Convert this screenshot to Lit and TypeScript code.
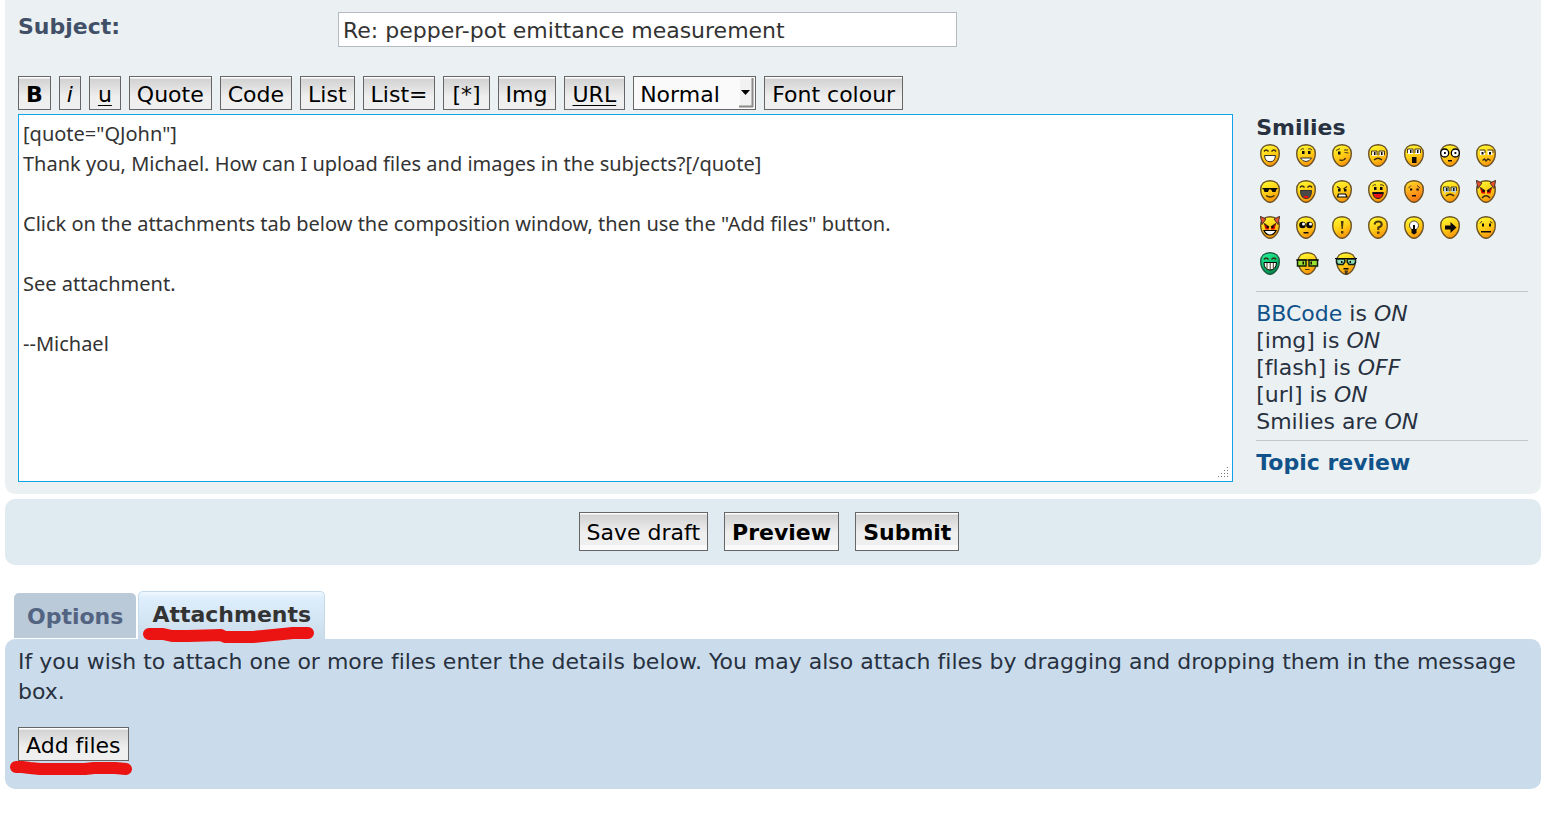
import { LitElement, html, svg, css } from "lit";
import { customElement, property, state } from "lit/decorators.js";

const round = svg`<path d="M10 .7C15.6.7 19.300 4 19.300 9.500 19.300 13.800 17 18.200 14 20.800Q10 23.800 6 20.800C3 18.200.7 13.800.7 9.500.7 4 4.400.7 10 .7Z"/>`;
const arcs = svg`<path class="l" d="M4 7.500Q6 4.500 8.500 7.500M11.500 7.500Q14 4.500 16 7.500"/>`;
const dots = svg`<path class="k" d="M6 7h2.500v3H6zM12 7h2.500v3H12z"/><path class="t" d="M4.500 6Q6 4 8 5M12 5Q14 4 16 6"/>`;
const tears = (y: number, c: string) => svg`
  <path d="M4 ${y}h5v5H4zM11 ${y}h5v5H11z" fill=${c}/>
  <path class="t" d="M3.500 ${y + 4}V${y}H9V${y + 4}M11 ${y + 4}V${y}H16.500V${y + 4}"/>
  <path class="k" d="M6 ${y + 1}h1.500v3H6zM13 ${y + 1}h1.500v3H13z"/>`;
const frown = svg`<path class="l" d="M6 16Q10 12.500 14 16"/>`;
const horns = svg`<path d="M.3.3 6 3 2 8.500ZM19.700.3 14 3 18 8.500Z" fill="#e8502c" stroke="#4a3430"/>`;
const rage = svg`<path d="M4 8l5 2.500v3H5.500zM16 8l-5 2.500v3h3.500z" fill="#d80800"/>
  <path class="l" d="M4 7.500 9 11M16 7.500 11 11"/><path class="k" d="M6.500 10h2v2h-2zM11.500 10h2v2h-2z"/>`;

const faces: Record<string, { w?: number; tone?: string; art: unknown }> = {
  "Very happy": { art: svg`${arcs}<path d="M4.500 11.500h11Q15 17.800 10 17.800T4.500 11.500Z" fill="#fff" stroke="#33302a"/>` },
  Smile: { art: svg`${dots}<path d="M4.500 14h11Q13.500 17.500 10 17.500T4.500 14Z" fill="#fff" stroke="#33302a"/>` },
  Wink: { art: svg`<path class="k" d="M6 7.500h2.500v3H6z"/><path class="t" d="M4 6.500 8 4.500M12.500 8.500 16.500 9M12 6H16"/><path class="l" d="M7.500 15.800Q12 17.500 13.500 14"/>` },
  Sad: { art: svg`${tears(7, "#f4ecd0")}${frown}` },
  Surprised: { art: svg`${tears(5, "#fff")}<path class="k" d="M8 13h4.500v6H8z"/>` },
  Shocked: { art: svg`<circle cx="4.700" cy="9" r="4" fill="#fff" stroke="#000" stroke-width="1.300"/><circle cx="15.300" cy="9" r="4" fill="#fff" stroke="#000" stroke-width="1.300"/><path class="k" d="M4 8h1.800v2H4zM14.500 8h1.800v2h-1.800zM8 16h4v1.500H8z"/>` },
  Confused: { art: svg`<path d="M4 6.500h5v4.500H4zM11.500 6.500h5v4.500h-5z" fill="#fff"/><path class="t" d="M3.500 6H9V9M11.500 6H17V9"/><path class="k" d="M5.500 8h2v2.500h-2zM13 8h2v2.500h-2z"/><path class="l" d="M6.500 16.500 8.500 15 10 17 12 15 14.500 16.500"/>` },
  Cool: { art: svg`<path class="k" d="M2.500 8h15v1.300h-1L15.500 12h-3L11 9.500H9L8 12H4.500L3.500 9.300h-1z"/><path class="l" d="M6 15.500Q10 18.500 14.500 15.500"/>` },
  Laughing: { art: svg`${arcs}<path d="M4.500 10.500h11Q15.500 18.500 10 18.500T4.500 10.500Z" fill="#4a4a48" stroke="#33302a"/><path d="M7 17Q10 14.500 13 17L10 18.500Z" fill="#f01010"/>` },
  Mad: { art: svg`<path class="l" d="M5 6.500 8.500 9M15 6.500 11.500 9"/><path class="k" d="M6 9h2.500v2.500H6zM12 9h2.500v2.500H12z"/><path d="M5.500 17 6.500 14h7L15 17Z" fill="#fff" stroke="#000" stroke-width="1.200"/>` },
  Razz: { art: svg`${dots}<path d="M4.500 12.500h11Q14.500 18.500 10 18.500T4.500 12.500Z" fill="#ef1414" stroke="#222"/><path class="k" d="M5 12.500h10v1.500H5z"/>` },
  Embarrassed: { tone: "blush", art: svg`<path class="k" d="M6 8.500h2.200v2H6zM12.500 8.500h2.200v2h-2.200zM8 15h4v1.500H8z"/><path class="t" d="M4.500 8 7 5.500M13 5.500 16 8"/>` },
  Crying: { art: svg`${tears(7, "#bcd4d8")}${frown}<path d="M5 12v2M15 12v2" stroke="#b8dce4"/>` },
  Evil: { art: svg`${horns}${rage}<path class="l" d="M6 18Q10 13.500 14 18"/>` },
  Twisted: { art: svg`${horns}${rage}<path d="M4 14.500h12Q14 19 10 19T4 14.500Z" fill="#fff" stroke="#000" stroke-width="1.200"/>` },
  "Rolling eyes": { art: svg`<circle cx="6.500" cy="9" r="3.300" class="k"/><circle cx="13.500" cy="9" r="3.300" class="k"/><circle cx="7.500" cy="8" r="1.500" fill="#fff"/><circle cx="14.500" cy="8" r="1.500" fill="#fff"/><path class="k" d="M7.500 16h5v1.500h-5z"/>` },
  Exclamation: { art: svg`<path d="M8.800 5h2.800L10.800 13H9.600zM9 15h2.400v2.400H9z" fill="#4d3a10"/>` },
  Question: { art: svg`<path d="M6.500 8.500Q7 5.500 10.300 5.500T13.800 8.500Q13.500 10.500 10.300 11.500V14" fill="none" stroke="#4d3a10" stroke-width="2"/><path d="M9 15.500h2.500v2.300H9z" fill="#4d3a10"/>` },
  Idea: { art: svg`<circle cx="10" cy="9.500" r="4.500" fill="#fff" stroke="#222" stroke-width=".8"/><path class="k" d="M9 9h2v4h1.500v4L10 18.500 7.500 17v-4H9z"/>` },
  Arrow: { art: svg`<path class="k" d="M5 9.500h5.500V6l6 5.500-6 5.500v-3.500H5z"/>` },
  Neutral: { art: svg`<path class="k" d="M6 7.500h2v3H6zM13 7.500h2v3h-2zM5 15h10v1.500H5z"/><path class="t" d="M4 7.500 6 5M14 5.500 16.500 7"/>` },
  Green: { tone: "green", art: svg`${arcs}<path d="M4 10.500h12.500Q16 18 10 18T4 10.500Z" fill="#fff" stroke="#000"/><path class="t" d="M7 11v6M10.200 11v7M13.300 11v6"/>` },
  Geek: { w: 23, art: svg`<path d="M1.500 8h8.500v6H1.500zM13 8h8.500v6H13z" fill="#9be02c" stroke="#10200a" stroke-width="1.500"/><path class="k" d="M0 7.500h23v1H0zM6.500 9.500H8v3H6.500zM14.500 9.500H16v3h-1.500z"/><path class="t" d="M9 17.500H13.500"/>` },
  "Uber geek": { w: 22, art: svg`<path d="M1.500 7h8.300v3L8 12.500H3L1.500 10.500zM12.200 7h8.300v3.500L19 12.500h-5L12.200 10z" fill="#8fdcb4" stroke="#0e1e18" stroke-width="1.500"/><path class="k" d="M0 6 22 6V7H0zM6 9h1.500v2H6zM14.500 9H16v2h-1.500zM8.500 16h5v1.500h-5z"/><path d="M9.500 18.500h3.500l-.7 4.500h-2z" fill="#4a3a20"/>` },
};

@customElement("smiley-face")
class SmileyFace extends LitElement {
  @property() name = "Smile";

  static styles = css`
    :host { display: block; height: 23px; }
    svg { display: block; }
    .k { fill: #0c0a08; }
    .l { fill: none; stroke: #3a2c10; stroke-width: 1.400; }
    .t { fill: none; stroke: #4a3a18; stroke-width: 1; }
  `;

  render() {
    const { w = 20, tone = "gold", art } = faces[this.name];
    const stops = { gold: ["#fff02a", "#ffc814", "#f88a08"], blush: ["#ffd024", "#ff9a1a", "#f07010"], green: ["#20e890", "#08b868", "#088048"] }[tone]!;
    return html`<svg width=${w} height="23" viewBox="0 0 ${w} 23" aria-hidden="true">
      <defs><linearGradient id="skin" x1=".3" y1="0" x2=".7" y2="1">
        <stop offset=".1" stop-color=${stops[0]} /><stop offset=".55" stop-color=${stops[1]} /><stop offset="1" stop-color=${stops[2]} />
      </linearGradient></defs>
      <g transform="translate(${(w - 20) / 2} 0)" fill="url(#skin)" stroke=${tone === "green" ? "#1c5a40" : "#6a5228"} stroke-width="1.400">${round}</g>
      ${art}
    </svg>`;
  }
}

@customElement("app-root")
class AppRoot extends LitElement {
  @state() tab = "attachments";

  static styles = css`
    :host {
      display: block;
      padding: 0 13px 0 5px;
      background: #fff;
      color: #28313f;
      font: 22px/30px Verdana, "DejaVu Sans", sans-serif;
      font-variant-ligatures: none;
    }
    * { box-sizing: border-box; }
    form { margin: 0; }
    a { color: #105289; text-decoration: none; }
    input, textarea, select, button { font: inherit; margin: 0; border-radius: 0; }
    .panel { border-radius: 10px; padding: 13px; }
    .compose { background: #ebf0f3; border-radius: 0 0 10px 10px; padding: 12px 13px; }
    .subject { display: flex; align-items: flex-start; }
    .subject label { width: 320px; color: #425067; font-weight: bold; }
    .subject input {
      width: 41%; height: 35px; padding: 3px 4px 1px;
      border: 1px solid #b4bac0; background: #fff; color: #333;
    }
    .toolbar { display: flex; flex-wrap: wrap; gap: 8px; margin-top: 29px; }
    .button {
      height: 34px; padding: 3px 7px 0; line-height: 30px; white-space: nowrap;
      border: 1px solid #666; color: #000;
      background: linear-gradient(#fff 0 1px, #d2d2d2 2px, #efefef 20px);
    }
    .bold { font-weight: bold; }
    .italic { font-style: italic; }
    .under, .item { padding: 3px 8px 0; }
    .under { text-decoration: underline; text-underline-offset: 3px; text-decoration-thickness: 1px; }
    .size { display: grid; width: 123px; }
    .size select {
      grid-area: 1 / 1; height: 34px; padding: 3px 6px 0; border: 1px solid #666;
      background: #fafafa; color: #000; appearance: none; line-height: 30px;
    }
    .size svg { grid-area: 1 / 1; justify-self: end; align-self: center; margin-right: 2px; pointer-events: none; }
    .body { display: flex; justify-content: space-between; margin-top: 4px; }
    .message { position: relative; flex: 0 1 1215px; height: 368px; }
    .message textarea {
      display: block; width: 100%; height: 100%; padding: 4px; resize: none; outline: none;
      border: 1px solid #11a3ea; background: #fff; color: #333;
      font: 20px/30px "Trebuchet MS", "Noto Sans", sans-serif;
    }
    .grip { position: absolute; right: 5px; bottom: 4px; }
    .side { width: 18%; line-height: 27px; }
    .side h3 { margin: 0; font-size: 22px; line-height: 27px; }
    .smilies { display: flex; flex-wrap: wrap; gap: 13px 16px; padding: 3px 4px 16px; }
    .smilies button { padding: 0; border: 0; background: none; }
    .status { border: solid #c4c8cb; border-width: 1px 0; padding: 8px 0 5px; }
    .status p { margin: 0; }
    .review { margin-top: 8px; font-weight: bold; }
    .actions { display: flex; justify-content: center; gap: 16px; margin-top: 5px; padding-right: 21px; padding-bottom: 14px; background: #e0ebf1; }
    .actions .button { height: 39px; background: linear-gradient(#fff 0 1px, #d2d2d2 2px, #efefef 20px 32px, #fafafa 32px); }
    .tabs { display: flex; align-items: flex-end; gap: 2px; margin-top: 26px; padding-left: 9px; }
    .tab {
      height: 45px; margin-bottom: 1px; padding: 2px 13px 0; border: 0; border-radius: 5px 5px 0 0;
      background: #bacad9; color: #536482; font-weight: bold;
    }
    .tab[aria-selected="true"] {
      height: 48px; margin-bottom: 0; padding: 0 13px 2px; border: 1px solid #c5d9e9; border-bottom: 0;
      background: linear-gradient(#f0f8ff, #deeefc 6px, #cadceb); color: #333;
    }
    .marked { position: relative; display: inline-block; }
    .mark { position: absolute; left: 5px; bottom: -4px; pointer-events: none; overflow: visible; }
    .files { background: #cadceb; padding: 8px 13px 28px; }
    .files p { margin: 0 0 20px; }
    .files .button { display: block; }
    .files .mark { left: -8px; bottom: -15px; }
  `;

  render() {
    const names = Object.keys(faces);
    const draft = `[quote="QJohn"]
Thank you, Michael. How can I upload files and images in the subjects?[/quote]

Click on the attachments tab below the composition window, then use the "Add files" button.

See attachment.

--Michael`;
    return html`
      <form @submit=${(e: Event) => e.preventDefault()}>
        <section class="panel compose">
          <div class="subject">
            <label for="subject">Subject:</label>
            <input id="subject" type="text" value="Re: pepper-pot emittance measurement" />
          </div>
          <div class="toolbar">
            <button type="button" class="button bold">B</button>
            <button type="button" class="button italic">i</button>
            <button type="button" class="button under">u</button>
            ${["Quote", "Code", "List", "List="].map((t) => html`<button type="button" class="button">${t}</button>`)}
            <button type="button" class="button item">[*]</button>
            <button type="button" class="button">Img</button>
            <button type="button" class="button under">URL</button>
            <div class="size">
              <select aria-label="Font size"><option>Normal</option></select>
              <svg width="15" height="30" aria-hidden="true"><path d="M1 1h12v28H1z" fill="#f2f2f2" /><path d="M13.500 0v29M0 28.500h14" stroke="#8a8a88" stroke-width="2" /><path d="M2 12h9l-4.500 5z" fill="#000" /></svg>
            </div>
            <button type="button" class="button">Font colour</button>
          </div>
          <div class="body">
            <div class="message">
              <textarea aria-label="Message" spellcheck="false" .value=${draft}></textarea>
              <svg class="grip" width="11" height="11" aria-hidden="true"><path d="M10 0h1v1h-1zM7 3h1v1H7zM10 3h1v1h-1zM4 6h1v1H4zM7 6h1v1H7zM10 6h1v1h-1zM1 9h1v1H1zM4 9h1v1H4zM7 9h1v1H7zM10 9h1v1h-1z" fill="#777" /></svg>
            </div>
            <aside class="side">
              <h3>Smilies</h3>
              <div class="smilies">
                ${names.map((n) => html`<button type="button" aria-label=${n}><smiley-face name=${n}></smiley-face></button>`)}
              </div>
              <div class="status">
                <p><a href="#bbcode">BBCode</a> is <em>ON</em></p>
                <p>[img] is <em>ON</em></p>
                <p>[flash] is <em>OFF</em></p>
                <p>[url] is <em>ON</em></p>
                <p>Smilies are <em>ON</em></p>
              </div>
              <div class="review"><a href="#review">Topic review</a></div>
            </aside>
          </div>
        </section>
        <section class="panel actions">
          <button type="button" class="button">Save draft</button>
          <button type="button" class="button bold">Preview</button>
          <button type="submit" class="button bold">Submit</button>
        </section>
        <div class="tabs" role="tablist">
          <button type="button" class="tab" role="tab" aria-selected=${this.tab === "options"} @click=${() => (this.tab = "options")}>Options</button>
          <div class="marked">
            <button type="button" class="tab" role="tab" aria-selected=${this.tab === "attachments"} @click=${() => (this.tab = "attachments")}>Attachments</button>
            <svg class="mark" width="171" height="16" viewBox="0 0 171 16" aria-hidden="true"><path d="M6 7H20L29 9H45L78 8 82 10H110L120 9 130 8 150 6H165" fill="none" stroke="#ec1313" stroke-width="12" stroke-linecap="round" stroke-linejoin="round" /></svg>
          </div>
        </div>
        <section class="panel files">
          <p>If you wish to attach one or more files enter the details below. You may also attach files by dragging and dropping them in the message box.</p>
          <div class="marked">
            <button type="button" class="button">Add files</button>
            <svg class="mark" width="122" height="16" viewBox="0 0 122 16" aria-hidden="true"><path d="M6 7H12L20 8 30 9H75L84 8H105L116 9" fill="none" stroke="#ec1313" stroke-width="12" stroke-linecap="round" stroke-linejoin="round" /></svg>
          </div>
        </section>
      </form>
    `;
  }
}
